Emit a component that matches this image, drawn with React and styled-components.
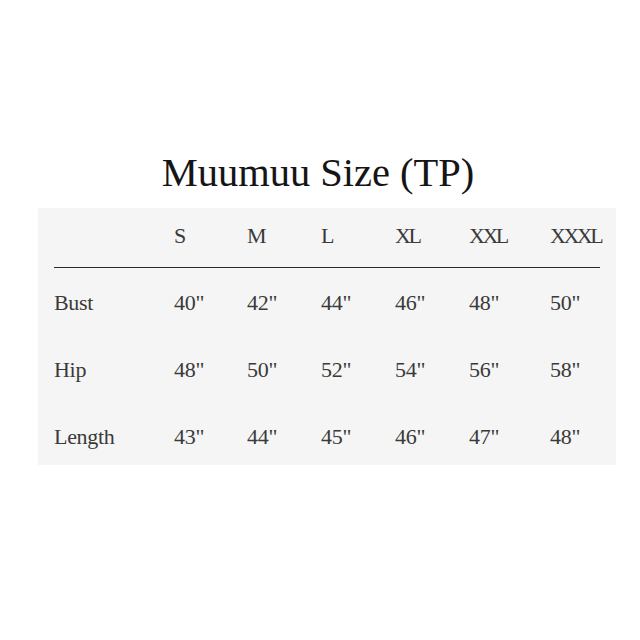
import React from "react";
import styled, { createGlobalStyle } from "styled-components";

const Global = createGlobalStyle`
  html, body { margin: 0; padding: 0; background: #ffffff; }
  body { font-family: "Liberation Serif", "Times New Roman", serif; }
`;

const Page = styled.div`
  width: 640px;
  height: 640px;
  display: flex;
  flex-direction: column;
  padding-top: 149px;
  box-sizing: border-box;
`;

const Title = styled.h1`
  margin: 0 0 11px;
  align-self: center;
  font-family: "Liberation Serif", "Times New Roman", serif;
  font-weight: 400;
  font-size: 40.5px;
  line-height: 48px;
  color: #151515;
  transform: translateX(-2px);
`;

const Panel = styled.div`
  width: 578px;
  margin-left: 38px;
  background: #f5f5f5;
  padding: 0 16px;
  box-sizing: border-box;
  display: flex;
  flex-direction: column;
`;

const Row = styled.div`
  display: grid;
  grid-template-columns: 120px 73px 74px 74px 74px 81px 1fr;
  padding: ${(p) => (p.$head ? "15px 0 18px" : p.$last ? "22px 0 15px" : "22px 0 19px")};
  border-bottom: ${(p) => (p.$head ? "1px solid #2a2a2a" : "none")};
`;

const Cell = styled.div`
  font-family: "Liberation Serif", "Times New Roman", serif;
  font-size: 22px;
  line-height: 26px;
  color: #3a3a3a;
  white-space: nowrap;
  letter-spacing: ${(p) => (p.$size ? "-2.5px" : "-0.3px")};
`;

const sizes = ["S", "M", "L", "XL", "XXL", "XXXL"];
const rows = [
  { label: "Bust", values: [40, 42, 44, 46, 48, 50] },
  { label: "Hip", values: [48, 50, 52, 54, 56, 58] },
  { label: "Length", values: [43, 44, 45, 46, 47, 48] },
];

export default function App() {
  return (
    <>
      <Global />
      <Page>
        <Title>Muumuu Size (TP)</Title>
        <Panel>
          <Row $head>
            <Cell />
            {sizes.map((s) => (
              <Cell key={s} $size>
                {s}
              </Cell>
            ))}
          </Row>
          {rows.map((r, i) => (
            <Row key={r.label} $last={i === rows.length - 1}>
              <Cell>{r.label}</Cell>
              {r.values.map((v, j) => (
                <Cell key={j}>{v}"</Cell>
              ))}
            </Row>
          ))}
        </Panel>
      </Page>
    </>
  );
}
